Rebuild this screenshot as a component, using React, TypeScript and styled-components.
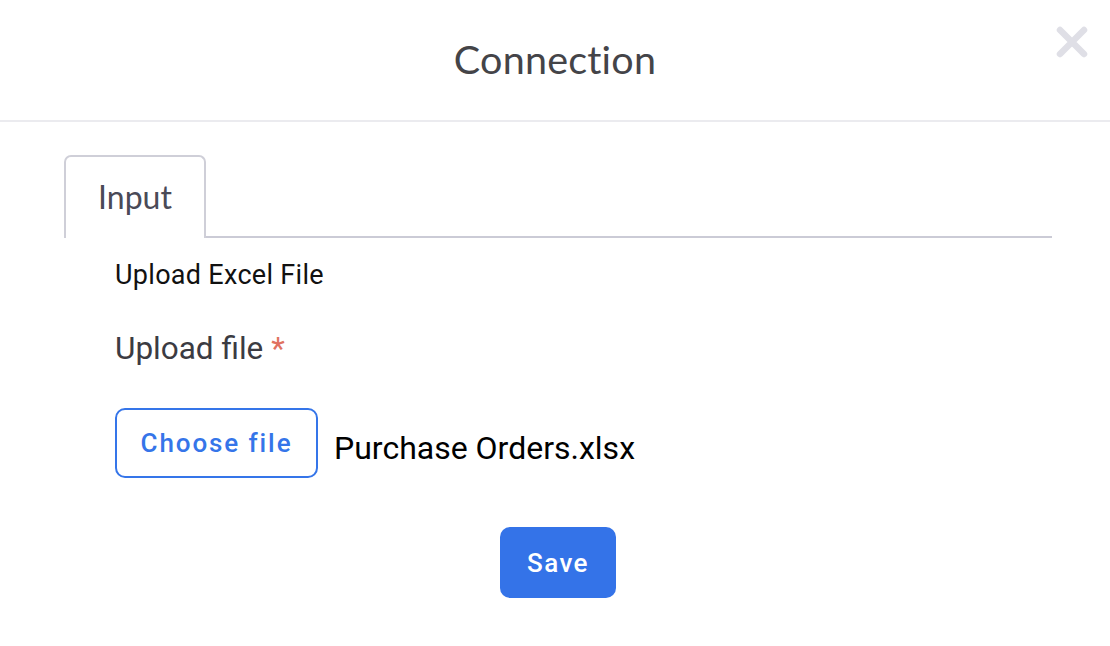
import * as React from "react";
import styled, { createGlobalStyle } from "styled-components";

const GlobalStyle = createGlobalStyle`
  html, body {
    margin: 0;
    padding: 0;
    background: #ffffff;
  }
`;

const Modal = styled.div`
  width: 1110px;
  height: 646px;
  background: #ffffff;
  font-family: Roboto, "Liberation Sans", sans-serif;
`;

const Header = styled.div`
  position: relative;
  height: 122px;
  display: flex;
  align-items: center;
  justify-content: center;
  border-bottom: 2px solid #ebebef;
  box-sizing: border-box;
  padding-bottom: 4px;
`;

const Title = styled.h1`
  margin: 0;
  font-family: Lato, "Open Sans", sans-serif;
  font-weight: 400;
  font-size: 39.5px;
  color: #444448;
  letter-spacing: 0.2px;
`;

const CloseButton = styled.button`
  position: absolute;
  top: 24px;
  right: 20px;
  width: 36px;
  height: 36px;
  padding: 0;
  border: none;
  background: transparent;
  display: flex;
  align-items: center;
  justify-content: center;
  cursor: pointer;
`;

const Body = styled.div`
  padding: 33px 58px 0 64px;
`;

const TabBar = styled.div`
  display: flex;
  align-items: flex-end;
  height: 83px;
`;

const Tab = styled.div<{ active?: boolean }>`
  width: 142px;
  height: 83px;
  box-sizing: border-box;
  display: flex;
  align-items: center;
  justify-content: center;
  padding-bottom: 2px;
  border: 2px solid #cfcfd8;
  border-bottom: none;
  border-radius: 7px 7px 0 0;
  font-family: Lato, "Open Sans", sans-serif;
  font-size: 32px;
  color: #4a4a57;
`;

const TabRule = styled.div`
  flex: 1;
  border-bottom: 2px solid #cbcbd6;
`;

const Panel = styled.div`
  padding: 22px 0 0 51px;
`;

const SectionTitle = styled.div`
  font-size: 27px;
  color: #111111;
  line-height: 30px;
  letter-spacing: 0.3px;
`;

const FieldLabel = styled.div`
  margin-top: 42px;
  font-size: 31.5px;
  color: #3b3b42;
  line-height: 34px;
`;

const Required = styled.span`
  color: #e07260;
  margin-left: 8px;
`;

const FileRow = styled.div`
  margin-top: 42px;
  display: flex;
  align-items: center;
  gap: 16px;
`;

const ChooseButton = styled.button`
  width: 203px;
  height: 70px;
  box-sizing: border-box;
  border: 2px solid #3575e9;
  border-radius: 10px;
  background: #ffffff;
  color: #3575e9;
  font-family: Roboto, "Liberation Sans", sans-serif;
  font-weight: 500;
  font-size: 26px;
  letter-spacing: 1.9px;
  cursor: pointer;
`;

const FileName = styled.span`
  font-size: 32px;
  color: #000000;
  padding-top: 10px;
`;

const Footer = styled.div`
  display: flex;
  justify-content: center;
  padding-top: 49px;
`;

const SaveButton = styled.button`
  width: 116px;
  height: 71px;
  border: none;
  border-radius: 10px;
  background: #3473e8;
  color: #ffffff;
  font-family: Roboto, "Liberation Sans", sans-serif;
  font-weight: 500;
  font-size: 26px;
  letter-spacing: 1.4px;
  cursor: pointer;
`;

const CloseIcon = () => (
  <svg width="32" height="32" viewBox="0 0 32 32">
    <path
      d="M4 4 L28 28 M28 4 L4 28"
      stroke="#dfdfe6"
      strokeWidth="6.5"
      strokeLinecap="round"
    />
  </svg>
);

export default function App() {
  return (
    <>
      <GlobalStyle />
      <Modal>
        <Header>
          <Title>Connection</Title>
          <CloseButton aria-label="Close">
            <CloseIcon />
          </CloseButton>
        </Header>
        <Body>
          <TabBar>
            <Tab active>Input</Tab>
            <TabRule />
          </TabBar>
          <Panel>
            <SectionTitle>Upload Excel File</SectionTitle>
            <FieldLabel>
              Upload file<Required>*</Required>
            </FieldLabel>
            <FileRow>
              <ChooseButton>Choose file</ChooseButton>
              <FileName>Purchase Orders.xlsx</FileName>
            </FileRow>
          </Panel>
          <Footer>
            <SaveButton>Save</SaveButton>
          </Footer>
        </Body>
      </Modal>
    </>
  );
}
